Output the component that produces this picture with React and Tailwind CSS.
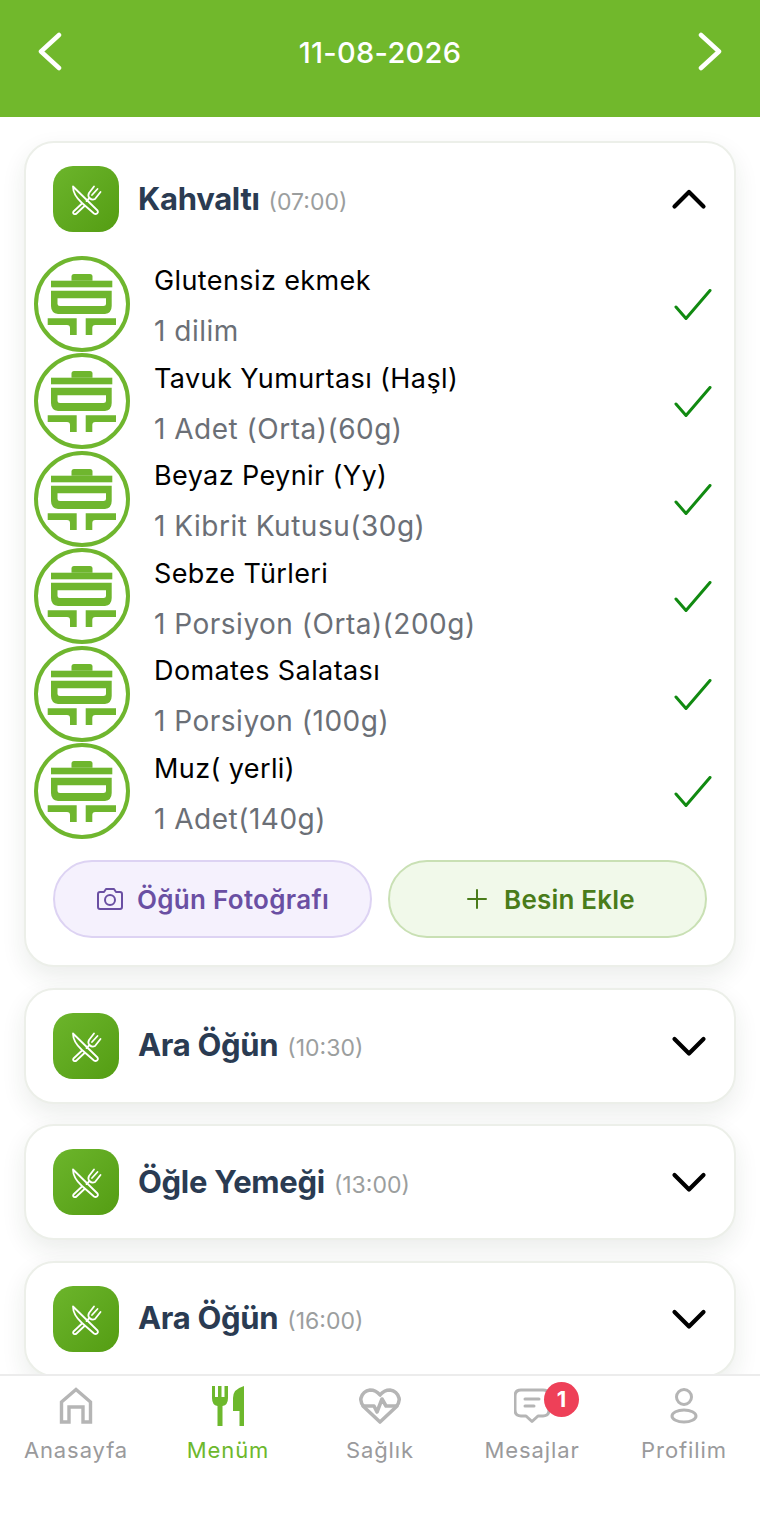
import React from "react";

const font = "font-['Inter','Liberation_Sans',sans-serif]";

function ChevronLeft({ className }) {
  return (
    <svg width="26" height="40" viewBox="0 0 26 40" fill="none" className={className}>
      <path d="M22 3L4 19.5L22 36" stroke="white" strokeWidth="4.5" strokeLinecap="round" strokeLinejoin="round" />
    </svg>
  );
}

function ChevronRight() {
  return (
    <svg width="26" height="40" viewBox="0 0 26 40" fill="none">
      <path d="M4 3L22 19.5L4 36" stroke="white" strokeWidth="4.5" strokeLinecap="round" strokeLinejoin="round" />
    </svg>
  );
}

function MealIcon() {
  return (
    <div className="flex h-[66px] w-[66px] shrink-0 items-center justify-center rounded-[20px] bg-gradient-to-br from-[#6cb52b] to-[#549d12]">
      <svg width="66" height="66" viewBox="0 0 66 66" fill="none" stroke="white" strokeWidth="1.8" strokeLinejoin="round" strokeLinecap="round">
        <path d="M20 20.5L44.5 44.5Q45.5 46.5 44 47.5Q42.5 48.5 41 47.5L29 37Q20 29 20 20.5Z" />
        <path d="M28.5 38L20.5 45.5Q19.5 47 21 48Q22.5 48.5 23.5 47.5L31.5 40" />
        <path d="M41 20.5L36 27Q34.5 30 36.5 32Q39 34.5 42 33L47.5 26M44.5 23L39 29M36.5 32L33.5 35" />
      </svg>
    </div>
  );
}

function PotIcon() {
  return (
    <svg width="96" height="96" viewBox="0 0 96 96" className="shrink-0">
      <circle cx="48" cy="48" r="46" fill="white" stroke="#6fb62e" strokeWidth="4" />
      <g fill="#6fb62e">
        <path d="M37.5 24.7V20.5Q37.5 18 40 18H56Q58.5 18 58.5 20.5V24.7Z" />
        <rect x="17" y="24.7" width="61.3" height="6.6" />
        <path
          fillRule="evenodd"
          d="M17 34.7H77.7V50Q77.7 57 71 58H24Q17 57 17 50ZM23.5 42.3V48Q23.5 50 26 50H69.5Q72 50 72 48V42.3Z"
        />
        <path d="M13.7 62.3H42.7V79H36V72Q36 69 33 69H13.7Z" />
        <path d="M82 62.3H51.7V79H58.3V72Q58.3 69 61.3 69H82Z" />
      </g>
    </svg>
  );
}

function CheckIcon() {
  return (
    <svg width="40" height="34" viewBox="0 0 40 34" fill="none" className="shrink-0">
      <path d="M4 18L14 29.5L38 1.5" stroke="#118a11" strokeWidth="3" strokeLinecap="round" strokeLinejoin="round" />
    </svg>
  );
}

function Chevron({ up }) {
  return (
    <svg width="38" height="24" viewBox="0 0 38 24" fill="none">
      <path
        d={up ? "M4.5 19.5L19 5L33.5 19.5" : "M4.5 5L19 19.5L33.5 5"}
        stroke="black"
        strokeWidth="4.2"
        strokeLinecap="round"
        strokeLinejoin="round"
      />
    </svg>
  );
}

function FoodRow({ name, amount }) {
  return (
    <div className="flex h-[97.5px] items-center">
      <PotIcon />
      <div className="ml-[24px] flex h-full flex-1 flex-col">
        <span className="mt-[8px] text-[27px] leading-[36px] tracking-[0.4px] text-black">{name}</span>
        <span className="mt-[14px] text-[28px] leading-[36px] tracking-[0.5px] text-[#6b6f76]">{amount}</span>
      </div>
      <div className="mr-[2px] mt-[4px]">
        <CheckIcon />
      </div>
    </div>
  );
}

function MealCard({ title, time, open, className, children }) {
  return (
    <div className={`rounded-[30px] border-2 border-[#ecefe9] bg-white shadow-[0_10px_24px_rgba(30,50,30,0.09)] ${className}`}>
      <div className="flex h-[66px] items-center pl-[27px] pr-[26px]">
        <MealIcon />
        <div className="ml-[19px] flex flex-1 items-baseline">
          <span className="text-[31px] font-bold tracking-[-0.3px] text-[#2a3b52]">{title}</span>
          <span className="ml-[9px] text-[23px] text-[#9b9e9e]">{time}</span>
        </div>
        <Chevron up={open} />
      </div>
      {children}
    </div>
  );
}

const foods = [
  ["Glutensiz ekmek", "1 dilim"],
  ["Tavuk Yumurtası (Haşl)", "1 Adet (Orta)(60g)"],
  ["Beyaz Peynir (Yy)", "1 Kibrit Kutusu(30g)"],
  ["Sebze Türleri", "1 Porsiyon (Orta)(200g)"],
  ["Domates Salatası", "1 Porsiyon (100g)"],
  ["Muz( yerli)", "1 Adet(140g)"],
];

function TabItem({ label, active, children }) {
  return (
    <div className="relative flex flex-1 flex-col items-center">
      <div className="flex h-[60px] w-full items-center justify-center">{children}</div>
      <span className={`text-[22px] leading-[28px] tracking-[0.9px] ${active ? "text-[#6db82c]" : "text-[#9a9a9c]"}`}>
        {label}
      </span>
    </div>
  );
}

export default function App() {
  return (
    <div className={`${font} flex h-[1538px] w-[760px] flex-col overflow-hidden bg-white`}>
      <header className="flex h-[117px] shrink-0 items-start justify-between bg-[#71b82c] pl-[37px] pr-[37px] pt-[32px]">
        <ChevronLeft />
        <span className="pt-[2px] text-[29px] font-medium leading-[38px] tracking-[0.3px] text-white">11-08-2026</span>
        <ChevronRight />
      </header>

      <main className="flex min-h-0 flex-1 flex-col gap-[20.5px] overflow-hidden px-[24px] pt-[24px]">
        <MealCard title="Kahvaltı" time="(07:00)" open className="shrink-0 pt-[23px]">
          <div className="mt-[23px] pl-[8px] pr-[20px]">
            {foods.map(([name, amount]) => (
              <FoodRow key={name} name={name} amount={amount} />
            ))}
          </div>
          <div className="mt-[20px] grid grid-cols-2 gap-[16px] px-[27px] pb-[27px]">
            <button className="flex h-[78px] items-center justify-center gap-[13px] rounded-full border-2 border-[#ddd3f3] bg-[#f5f1fd] text-[26px] font-semibold tracking-[0.3px] text-[#6a4fa3]">
              <svg width="28" height="24" viewBox="0 0 28 24" fill="none" stroke="#6a4fa3" strokeWidth="2">
                <path d="M2 7Q2 5 4 5H8L10 2H18L20 5H24Q26 5 26 7V20Q26 22 24 22H4Q2 22 2 20Z" strokeLinejoin="round" />
                <circle cx="14" cy="13" r="5" />
              </svg>
              Öğün Fotoğrafı
            </button>
            <button className="flex h-[78px] items-center justify-center gap-[16px] rounded-full border-2 border-[#c9e0b4] bg-[#f1f9ea] pl-[6px] text-[26px] font-semibold tracking-[0.2px] text-[#4a7c1a]">
              <svg width="22" height="22" viewBox="0 0 22 22" fill="none" stroke="#4a7c1a" strokeWidth="2">
                <path d="M11 2V20M2 11H20" strokeLinecap="round" />
              </svg>
              Besin Ekle
            </button>
          </div>
        </MealCard>
        <MealCard title="Ara Öğün" time="(10:30)" className="shrink-0 py-[23px]" />
        <MealCard title="Öğle Yemeği" time="(13:00)" className="shrink-0 py-[23px]" />
        <MealCard title="Ara Öğün" time="(16:00)" className="shrink-0 py-[23px]" />
      </main>

      <nav className="flex h-[164px] shrink-0 border-t-2 border-[#ececec] bg-white">
        <TabItem label="Anasayfa">
          <svg width="34" height="38" viewBox="0 0 34 38" fill="none" stroke="#b5b5b5" strokeWidth="3.4" strokeLinejoin="miter">
            <path d="M2.5 35V15L17 2.5L31.5 15V35H24V20H10V35Z" />
          </svg>
        </TabItem>
        <TabItem label="Menüm" active>
          <svg width="32" height="42" viewBox="0 0 32 42" fill="#6db82c">
            <path d="M0 1H3V12H6V1H9.5V12H12.5V1H16V13Q16 20 10.5 21V41H5.5V21Q0 20 0 13Z" />
            <path d="M32 1V41H27.5V26H21V13Q21 4 32 1Z" />
          </svg>
        </TabItem>
        <TabItem label="Sağlık">
          <svg width="42" height="36" viewBox="0 0 42 36" fill="none" stroke="#b5b5b5" strokeWidth="3.6" strokeLinejoin="round" strokeLinecap="round">
            <path d="M21 34L5 19Q1 14 2 10Q4 3 11 2Q17 2 21 7Q25 2 31 2Q38 3 40 10Q41 14 37 19Z" />
            <path d="M4 18H15L18 24L23 11L27 18H38" />
          </svg>
        </TabItem>
        <TabItem label="Mesajlar">
          <div className="relative h-[36px] w-[36px]">
            <svg width="36" height="36" viewBox="0 0 36 36" fill="none" stroke="#b5b5b5" strokeWidth="3" strokeLinejoin="round" strokeLinecap="round">
              <path d="M7 2H29Q35 2 35 8V22Q35 28 29 28H24L18 33.5L12 28H7Q1 28 1 22V8Q1 2 7 2Z" />
              <path d="M11 11H25M11 18H20" />
            </svg>
            <span className="absolute left-[30px] top-[-6px] flex h-[35px] w-[35px] items-center justify-center rounded-full bg-[#ee4058] text-[22px] font-bold text-white">
              1
            </span>
          </div>
        </TabItem>
        <TabItem label="Profilim">
          <svg width="28" height="36" viewBox="0 0 28 36" fill="none" stroke="#b5b5b5" strokeWidth="3">
            <circle cx="14" cy="9" r="7.5" />
            <ellipse cx="14" cy="28" rx="12" ry="6" />
          </svg>
        </TabItem>
      </nav>
    </div>
  );
}
